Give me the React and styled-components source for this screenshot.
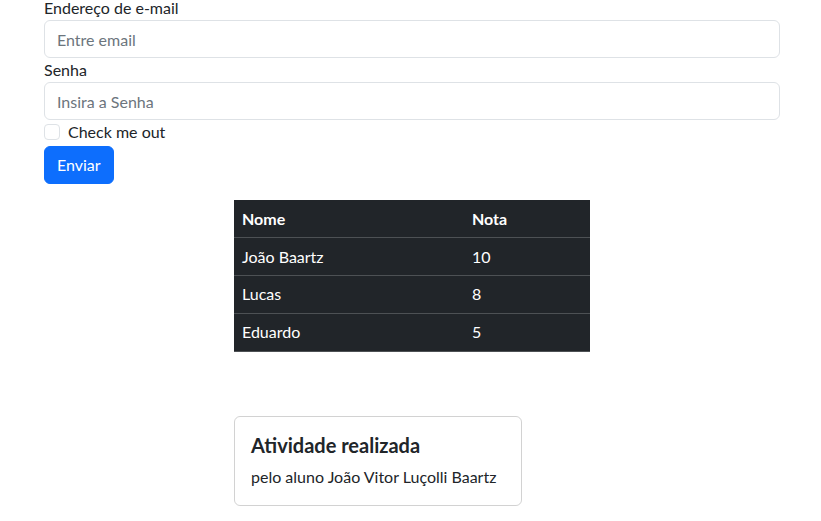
import React from "react";
import styled, { createGlobalStyle } from "styled-components";

const Global = createGlobalStyle`
  html, body { margin: 0; padding: 0; background: #fff; }
  body {
    font-family: "Segoe UI", Lato, "Liberation Sans", sans-serif;
    font-size: 16px;
    line-height: 1.5;
    color: #212529;
  }
  * { box-sizing: border-box; }
`;

const Page = styled.div`
  margin-top: -4px;
  padding-bottom: 16px;
`;

const Form = styled.form`
  width: 736px;
  margin-left: 44px;
  display: flex;
  flex-direction: column;
`;

const Label = styled.label`
  display: block;
  height: 24px;
`;

const Input = styled.input`
  display: block;
  width: 100%;
  height: 38px;
  padding: 6px 12px;
  font: inherit;
  color: #212529;
  border: 1px solid #dee2e6;
  border-radius: 6px;
  background: #fff;
  outline: none;
  &::placeholder { color: #6c757d; }
`;

const CheckRow = styled.div`
  display: flex;
  align-items: center;
  gap: 8px;
  height: 24px;
`;

const Check = styled.span`
  width: 16px;
  height: 16px;
  border: 1px solid #dee2e6;
  border-radius: 4px;
  background: #fff;
`;

const Button = styled.button`
  align-self: flex-start;
  margin-top: 2px;
  height: 38px;
  padding: 6px 12px;
  font: inherit;
  color: #fff;
  background: #0d6efd;
  border: 1px solid #0d6efd;
  border-radius: 6px;
`;

const Lower = styled.div`
  margin-left: 234px;
  margin-top: 16px;
  display: flex;
  flex-direction: column;
  align-items: flex-start;
  gap: 64px;
`;

const Table = styled.table`
  width: 356px;
  border-collapse: collapse;
  background: #212529;
  color: #fff;
`;

const Th = styled.th`
  text-align: left;
  font-weight: 700;
  padding: 0 8px;
  height: 37.75px;
  border-bottom: 1px solid #4d5154;
  width: ${(p) => p.$w || "auto"};
`;

const Td = styled.td`
  padding: 0 8px;
  height: 37.75px;
  border-bottom: 1px solid #4d5154;
`;

const Card = styled.div`
  width: 288px;
  height: 90px;
  padding: 16px;
  border: 1px solid rgba(0, 0, 0, 0.175);
  border-radius: 6px;
`;

const CardTitle = styled.h5`
  margin: 0 0 8px;
  font-size: 20px;
  font-weight: 700;
  line-height: 1.2;
`;

const CardText = styled.p`
  margin: 0;
  white-space: nowrap;
`;

const rows = [
  ["João Baartz", "10"],
  ["Lucas", "8"],
  ["Eduardo", "5"],
];

export default function App() {
  return (
    <Page>
      <Global />
      <Form onSubmit={(e) => e.preventDefault()}>
        <Label>Endereço de e-mail</Label>
        <Input type="email" placeholder="Entre email" />
        <Label>Senha</Label>
        <Input type="password" placeholder="Insira a Senha" />
        <CheckRow>
          <Check />
          <span>Check me out</span>
        </CheckRow>
        <Button type="submit">Enviar</Button>
      </Form>
      <Lower>
        <Table>
          <thead>
            <tr>
              <Th $w="230px">Nome</Th>
              <Th>Nota</Th>
            </tr>
          </thead>
          <tbody>
            {rows.map(([n, v]) => (
              <tr key={n}>
                <Td>{n}</Td>
                <Td>{v}</Td>
              </tr>
            ))}
          </tbody>
        </Table>
        <Card>
          <CardTitle>Atividade realizada</CardTitle>
          <CardText>pelo aluno João Vitor Luçolli Baartz</CardText>
        </Card>
      </Lower>
    </Page>
  );
}
